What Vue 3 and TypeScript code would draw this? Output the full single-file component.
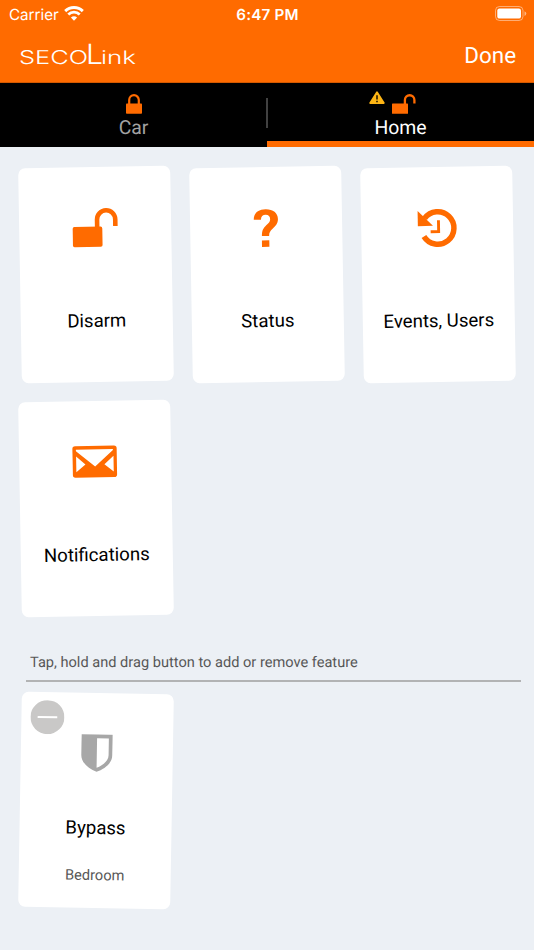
<script setup lang="ts">
type IconName = 'unlock' | 'question' | 'history' | 'mail'

interface Feature {
  icon: IconName
  label: string
}

const features: Feature[] = [
  { icon: 'unlock', label: 'Disarm' },
  { icon: 'question', label: 'Status' },
  { icon: 'history', label: 'Events, Users' },
  { icon: 'mail', label: 'Notifications' },
]
</script>

<template>
  <div class="screen">
    <header class="header">
      <div class="status-bar">
        <div class="carrier">
          <span class="carrier-name">Carrier</span>
          <svg class="wifi" viewBox="0 0 20 15" width="20" height="15">
            <path d="M1.2 5.1a12.6 12.6 0 0 1 17.6 0" fill="none" stroke="#fff" stroke-width="2.9" />
            <path d="M4.3 8.5a8.2 8.2 0 0 1 11.4 0" fill="none" stroke="#fff" stroke-width="2.8" />
            <path d="M10 14.8 6.9 11.6a4.5 4.5 0 0 1 6.2 0z" fill="#fff" />
          </svg>
        </div>
        <span class="time">6:47 PM</span>
        <svg class="battery" viewBox="0 0 32 15" width="32" height="15">
          <rect x=".5" y=".5" width="27.5" height="14" rx="4" fill="none" stroke="#fff" stroke-opacity=".45" />
          <rect x="2.3" y="2.4" width="23.7" height="10.2" rx="2.2" fill="#fff" />
          <path d="M29.5 5.3q1.8.6 1.8 2.3t-1.8 2.3z" fill="#fff" fill-opacity=".5" />
        </svg>
      </div>
      <div class="nav">
        <svg class="logo" viewBox="0 0 126 42" width="126" height="42">
          <text x="1" y="30.4" font-size="19" textLength="69" lengthAdjust="spacingAndGlyphs">SECO</text>
          <text x="68" y="30.4" font-size="28" textLength="17" lengthAdjust="spacingAndGlyphs">L</text>
          <text x="83" y="30.4" font-size="18.6" textLength="35" lengthAdjust="spacingAndGlyphs">ink</text>
        </svg>
        <span class="done">Done</span>
      </div>
    </header>

    <nav class="tabs">
      <div class="tab">
        <svg class="tab-icon" viewBox="0 0 16 20" width="16" height="20">
          <path d="M3.2 10V6a4.8 4.8 0 0 1 9.6 0v4" fill="none" stroke="#ff6b00" stroke-width="2.2" />
          <rect y="9.6" width="16" height="10.2" rx=".8" fill="#ff6b00" />
        </svg>
        <span>Car</span>
      </div>
      <div class="divider"></div>
      <div class="tab active">
        <div class="tab-icons">
          <svg class="warning" viewBox="0 0 16 13" width="16" height="13">
            <path d="M8 1.2 14.8 12H1.2z" fill="#fdb515" stroke="#fdb515" stroke-width="1.8" stroke-linejoin="round" />
            <path d="M8 4.3v4.3M8 9.7v1.6" stroke="#332200" stroke-width="1.7" />
          </svg>
          <svg class="tab-icon" viewBox="0 0 24 20" width="24" height="20">
            <path d="M12.9 10V6a4.75 4.75 0 0 1 9.5 0v3.5" fill="none" stroke="#ff6b00" stroke-width="2.3" />
            <rect y="9.6" width="16" height="10.2" rx=".6" fill="#ff6b00" />
          </svg>
        </div>
        <span>Home</span>
      </div>
    </nav>

    <main class="content">
      <section class="grid">
        <article v-for="feature in features" :key="feature.label" class="card tilt-left">
          <svg class="card-icon" viewBox="0 0 46 40" width="46" height="40">
            <g v-if="feature.icon === 'unlock'">
              <path d="M25 20.4V11.6a9.1 9.1 0 0 1 18.2 0v6.7" fill="none" stroke="#ff6b00" stroke-width="4.6" />
              <rect x=".4" y="18.7" width="29.7" height="20.2" rx="1.8" fill="#ff6b00" />
            </g>
            <g v-else-if="feature.icon === 'question'" fill="#ff6b00">
              <path d="M10.7 11.6C10.9 4.3 15.7 1.2 22.7 1.2c7.3 0 12.2 3.8 12.2 10 0 4.5-2.7 7.1-5.5 9.7-2.5 2.2-3.6 3.9-3.6 7.1h-7.2c0-5 1.1-7.6 4.5-10.8 2.4-2.2 4-3.5 4-6.1 0-2.5-1.5-4.3-4.4-4.3-3 0-4.7 1.8-4.8 4.8z" />
              <rect x="18.5" y="32.3" width="7.4" height="6.6" />
            </g>
            <g v-else-if="feature.icon === 'history'" fill="none" stroke="#ff6b00">
              <path d="M10.6 10.2A16.2 16.2 0 1 1 9.6 28.2" stroke-width="5.5" />
              <path d="M3.7 2.7V17.9L18.8 17.6z" fill="#ff6b00" stroke="none" />
              <path d="M24.4 12.3v11.3h-8" stroke-width="2.9" />
            </g>
            <g v-else>
              <rect x=".4" y="3.9" width="44.3" height="31.5" rx="2.8" fill="#ff6b00" />
              <path d="M3.9 7.3h37v1L22.9 24.5 3.9 8.8zM4 14.1l9.2 8.2L4 29.8zM41.4 14.1l-9.2 8.2 9.2 7.5z" fill="#fff" />
            </g>
          </svg>
          <span class="card-label">{{ feature.label }}</span>
        </article>
      </section>

      <p class="hint">Tap, hold and drag button to add or remove feature</p>

      <article class="card tilt-right">
        <svg class="remove" viewBox="0 0 34 34" width="34" height="34">
          <circle cx="17" cy="17" r="17" fill="#c9c8c7" />
          <path d="M7.2 17h19.6" stroke="#fff" stroke-width="2.1" />
        </svg>
        <svg class="shield" viewBox="0 0 32 38" width="32" height="38">
          <path d="M.5.5h31V21C31.5 29 24 35 16 37.8 8 35 .5 29 .5 21z" fill="#a7a7a7" />
          <path d="M16 4.2h11.8V21c0 5.5-5.3 10.2-11.8 12.8z" fill="#fff" />
        </svg>
        <span class="card-label">Bypass</span>
        <span class="card-sub">Bedroom</span>
      </article>
    </main>
  </div>
</template>

<style>
body {
  background: #ecf0f5;
}
</style>

<style scoped>
.screen {
  width: 534px;
  height: 950px;
  overflow: hidden;
  background: #ecf0f5;
  font-family: Roboto, sans-serif;
  text-rendering: geometricPrecision;
}

.header {
  box-sizing: border-box;
  height: 83px;
  background: #ff6b00;
  border-bottom: 1px solid #d45900;
  color: #fff;
}

.status-bar {
  display: grid;
  grid-template-columns: 1fr auto 1fr;
  align-items: center;
  height: 28px;
  padding: 0 7px 0 9px;
  font-family: Inter, sans-serif;
}

.carrier {
  display: flex;
  align-items: center;
  gap: 5px;
}

.carrier-name {
  width: 50px;
  font-size: 15.2px;
}

.wifi {
  margin-top: -2px;
}

.time {
  margin-right: 1px;
  font-size: 15.2px;
  font-weight: 600;
  letter-spacing: 0.2px;
}

.battery {
  justify-self: end;
  margin-top: -2px;
}

.nav {
  display: flex;
  align-items: center;
  justify-content: space-between;
  height: 54px;
  padding: 0 18px;
}

.logo {
  font-family: Inter, sans-serif;
  font-weight: 300;
  fill: #fff;
}

.done {
  padding-top: 2px;
  font-size: 22.4px;
}

.tabs {
  display: flex;
  height: 64px;
  background: #000;
}

.tab {
  box-sizing: border-box;
  flex: 1;
  display: flex;
  flex-direction: column;
  align-items: center;
  gap: 1.6px;
  padding-top: 11px;
  color: #a2a2a2;
  font-size: 19.4px;
  line-height: 24px;
}

.tab.active {
  border-bottom: 6px solid #ff6b00;
  color: #fff;
}

.tab-icon {
  display: block;
}

.tab-icons {
  display: flex;
  gap: 7px;
  margin-right: 16px;
}

.warning {
  margin-top: -3px;
}

.divider {
  width: 2px;
  height: 30px;
  margin: 15px -1px 0;
  background: #414141;
}

.content {
  padding: 20px 18px 0 19.6px;
}

.grid {
  display: grid;
  grid-template-columns: repeat(3, 152px);
  gap: 18.6px 19.4px;
}

.card {
  position: relative;
  box-sizing: border-box;
  display: flex;
  flex-direction: column;
  align-items: center;
  width: 152px;
  height: 215px;
  padding-top: 41px;
  border-radius: 7px;
  background: #fff;
}

.tilt-left {
  transform: rotate(-1deg);
}

.tilt-right {
  transform: rotate(1deg);
}

.card-icon {
  flex: none;
}

.card-label {
  margin-top: 61px;
  color: #000;
  font-size: 18.6px;
  line-height: 24px;
  white-space: nowrap;
}

.hint {
  margin: 37px -5px 11px 6.4px;
  padding: 0 4px 8px;
  border-bottom: 2px solid #b2b3b4;
  color: #575757;
  font-size: 14.6px;
  line-height: 19px;
}

.remove {
  position: absolute;
  top: 8px;
  left: 9px;
}

.shield {
  flex: none;
}

.tilt-right .card-label {
  margin-top: 44px;
}

.card-sub {
  margin-top: 26px;
  color: #575757;
  font-size: 14.6px;
  line-height: 19px;
}
</style>
